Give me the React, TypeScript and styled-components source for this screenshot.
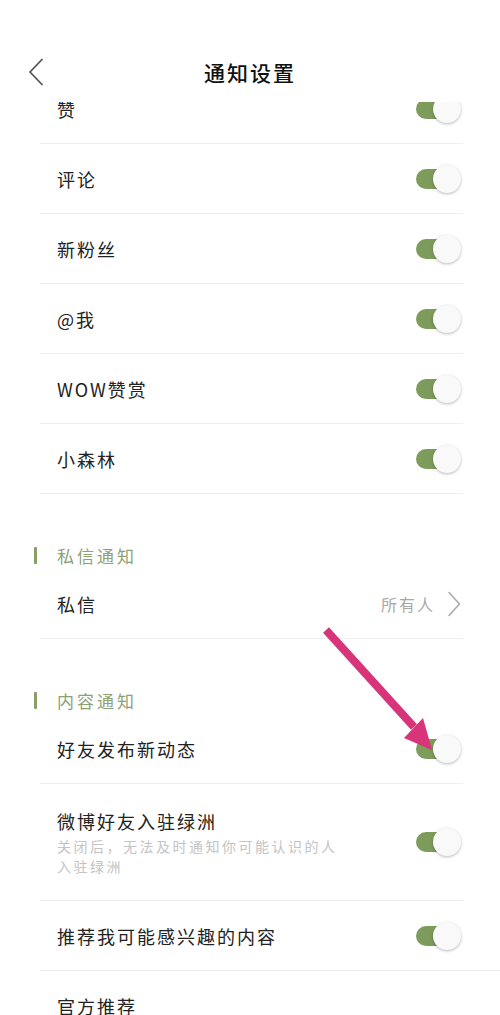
import { ReactElement } from 'react'
import styled, { createGlobalStyle } from 'styled-components'

const GlobalStyle = createGlobalStyle`
    html, body {
        margin: 0;
        padding: 0;
        background: #ffffff;
    }
    body {
        font-family: 'Noto Sans CJK SC', 'Noto Sans', sans-serif;
        color: #222222;
    }
`

const Page = styled.div`
    position: relative;
    width: 500px;
    height: 1015px;
    overflow: hidden;
    background: #ffffff;
    display: flex;
    flex-direction: column;
`

const Header = styled.header`
    position: relative;
    z-index: 2;
    flex: 0 0 102px;
    box-sizing: border-box;
    padding-top: 42px;
    display: grid;
    grid-template-columns: 70px 1fr 70px;
    align-items: center;
    background: #ffffff;
`

const BackButton = styled.button`
    justify-self: start;
    margin-left: 22px;
    width: 28px;
    height: 34px;
    padding: 0;
    border: none;
    background: transparent;
    display: flex;
    align-items: center;
    justify-content: center;
`

const Title = styled.h1`
    margin: 0;
    text-align: center;
    font-size: 21px;
    font-weight: 500;
    letter-spacing: 2px;
    color: #111111;
`

const Scroll = styled.div`
    flex: 1;
    overflow: hidden;
`

const Content = styled.div`
    margin-top: -28px;
`

const List = styled.div`
    display: flex;
    flex-direction: column;
`

const Row = styled.div<{ $full?: boolean; $tall?: boolean }>`
    box-sizing: border-box;
    min-height: 70px;
    margin-left: 40px;
    margin-right: ${(p) => (p.$full ? '0' : '37px')};
    padding: ${(p) => (p.$tall ? '24px 0 24px 17px' : '0 0 0 17px')};
    padding-right: ${(p) => (p.$full ? '39px' : '2px')};
    display: flex;
    align-items: center;
    justify-content: space-between;
    border-bottom: 1px solid #eeeeee;
`

const Texts = styled.div`
    display: flex;
    flex-direction: column;
`

const Label = styled.span`
    font-size: 18px;
    letter-spacing: 2px;
    color: #222222;
    line-height: 26px;
`

const Hint = styled.span`
    max-width: 290px;
    margin-top: 2px;
    font-size: 14px;
    letter-spacing: 2.5px;
    line-height: 20px;
    color: #c4c4c4;
`

const SectionTitle = styled.div`
    box-sizing: border-box;
    height: 75px;
    padding: 48px 0 0 34px;
    display: flex;
    align-items: flex-start;
`

const SectionBar = styled.span`
    width: 3px;
    height: 17px;
    margin-top: 5px;
    margin-right: 20px;
    border-radius: 1px;
    background: #86a066;
`

const SectionText = styled.span`
    font-size: 17px;
    line-height: 27px;
    letter-spacing: 3px;
    color: #8da175;
`

const Value = styled.span`
    display: flex;
    align-items: center;
    gap: 12px;
    font-size: 16px;
    letter-spacing: 2px;
    color: #a8a8a8;
`

const Toggle = styled.span`
    position: relative;
    width: 45px;
    height: 28px;
    flex: 0 0 45px;
`

const Track = styled.span<{ $on: boolean }>`
    position: absolute;
    left: 0;
    top: 4px;
    width: 32px;
    height: 20px;
    border-radius: 10px;
    background: ${(p) => (p.$on ? '#7d9c5c' : '#dddddd')};
`

const Knob = styled.span`
    position: absolute;
    left: 17px;
    top: 0;
    width: 28px;
    height: 28px;
    border-radius: 50%;
    background: #f9f9f9;
    box-shadow: 0 1px 3px rgba(0, 0, 0, 0.28);
`

const Arrow = styled.svg`
    position: absolute;
    left: 0;
    top: 0;
    z-index: 3;
    pointer-events: none;
`

function Switch({ on = true }: { on?: boolean }): ReactElement {
    return (
        <Toggle>
            <Track $on={on} />
            <Knob />
        </Toggle>
    )
}

const topItems = ['赞', '评论', '新粉丝', '@我', 'WOW赞赏', '小森林']

function App(): ReactElement {
    return (
        <Page>
            <GlobalStyle />
            <Header>
                <BackButton aria-label='返回'>
                    <svg width='18' height='28' viewBox='0 0 18 28'>
                        <path
                            d='M15 1.5 L3 14 L15 26.5'
                            fill='none'
                            stroke='#555'
                            strokeWidth='1.8'
                            strokeLinecap='round'
                            strokeLinejoin='round'
                        />
                    </svg>
                </BackButton>
                <Title>通知设置</Title>
                <span />
            </Header>
            <Scroll>
                <Content>
                    <List>
                        {topItems.map((item) => (
                            <Row key={item}>
                                <Label>{item}</Label>
                                <Switch />
                            </Row>
                        ))}
                    </List>

                    <SectionTitle>
                        <SectionBar />
                        <SectionText>私信通知</SectionText>
                    </SectionTitle>
                    <List>
                        <Row>
                            <Label>私信</Label>
                            <Value>
                                所有人
                                <svg width='14' height='26' viewBox='0 0 14 26'>
                                    <path
                                        d='M2 1.5 L12.5 13 L2 24.5'
                                        fill='none'
                                        stroke='#aaa'
                                        strokeWidth='1.6'
                                        strokeLinecap='round'
                                        strokeLinejoin='round'
                                    />
                                </svg>
                            </Value>
                        </Row>
                    </List>

                    <SectionTitle>
                        <SectionBar />
                        <SectionText>内容通知</SectionText>
                    </SectionTitle>
                    <List>
                        <Row>
                            <Label>好友发布新动态</Label>
                            <Switch />
                        </Row>
                        <Row $tall>
                            <Texts>
                                <Label>微博好友入驻绿洲</Label>
                                <Hint>关闭后，无法及时通知你可能认识的人入驻绿洲</Hint>
                            </Texts>
                            <Switch />
                        </Row>
                        <Row $full>
                            <Label>推荐我可能感兴趣的内容</Label>
                            <Switch />
                        </Row>
                        <Row>
                            <Label>官方推荐</Label>
                        </Row>
                    </List>
                </Content>
            </Scroll>
            <Arrow width='500' height='1015' viewBox='0 0 500 1015'>
                <line
                    x1='326'
                    y1='630'
                    x2='414'
                    y2='727'
                    stroke='#d8347a'
                    strokeWidth='8'
                    strokeLinecap='butt'
                />
                <polygon points='432,750 404,738 423,718' fill='#d8347a' />
            </Arrow>
        </Page>
    )
}

export default App
